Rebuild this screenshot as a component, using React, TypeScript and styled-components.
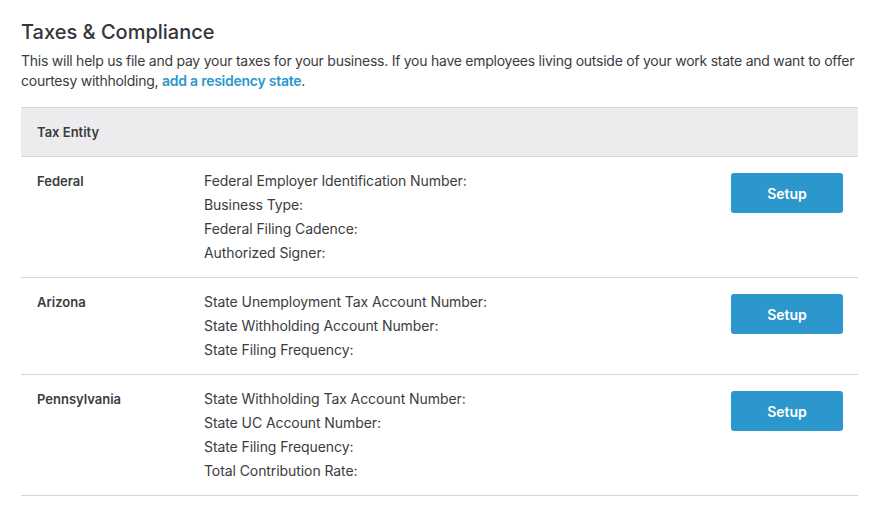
import styled, { createGlobalStyle } from 'styled-components'

const GlobalStyle = createGlobalStyle`
  body {
    margin: 0;
    background: #fff;
    font-family: Inter, "Liberation Sans", sans-serif;
    color: #3a3c40;
  }
`

const Page = styled.div`
  padding: 19px 30px 0 21px;
`

const Title = styled.h1`
  margin: 0;
  font-size: 20px;
  line-height: 26px;
  font-weight: 500;
  color: #33363b;
`

const Intro = styled.p`
  margin: 6px 0 16px;
  font-size: 14px;
  line-height: 20px;
  letter-spacing: -0.25px;
`

const Link = styled.a`
  color: #2b97cc;
  font-weight: 600;
  text-decoration: none;
`

const Table = styled.div`
  border-top: 1px solid #d6d6d9;
`

const Head = styled.div`
  background: #ececee;
  height: 48px;
  display: flex;
  align-items: center;
  padding-left: 16px;
  font-size: 13px;
  font-weight: 600;
  border-bottom: 1px solid #d6d6d9;
`

const Row = styled.div`
  display: grid;
  grid-template-columns: 167px 1fr 112px;
  align-items: start;
  padding: 12px 15px 12px 16px;
  border-bottom: 1px solid #d6d6d9;
`

const Entity = styled.div`
  font-size: 13px;
  font-weight: 600;
  line-height: 24px;
`

const Fields = styled.ul`
  list-style: none;
  margin: 0;
  padding: 0;
  font-size: 14px;
  line-height: 24px;
  letter-spacing: -0.08px;
`

const Button = styled.button`
  margin-top: 4px;
  width: 112px;
  height: 40px;
  border: none;
  border-radius: 3px;
  background: #2b97cc;
  color: #fff;
  font-family: inherit;
  font-size: 14px;
  font-weight: 600;
`

const entities = [
  {
    name: 'Federal',
    fields: [
      'Federal Employer Identification Number:',
      'Business Type:',
      'Federal Filing Cadence:',
      'Authorized Signer:',
    ],
  },
  {
    name: 'Arizona',
    fields: [
      'State Unemployment Tax Account Number:',
      'State Withholding Account Number:',
      'State Filing Frequency:',
    ],
  },
  {
    name: 'Pennsylvania',
    fields: [
      'State Withholding Tax Account Number:',
      'State UC Account Number:',
      'State Filing Frequency:',
      'Total Contribution Rate:',
    ],
  },
]

export default function App() {
  return (
    <Page>
      <GlobalStyle />
      <Title>Taxes &amp; Compliance</Title>
      <Intro>
        This will help us file and pay your taxes for your business. If you have employees
        living outside of your work state and want to offer courtesy withholding,{' '}
        <Link href="#">add a residency state</Link>.
      </Intro>
      <Table>
        <Head>Tax Entity</Head>
        {entities.map((e) => (
          <Row key={e.name}>
            <Entity>{e.name}</Entity>
            <Fields>
              {e.fields.map((f) => (
                <li key={f}>{f}</li>
              ))}
            </Fields>
            <Button>Setup</Button>
          </Row>
        ))}
      </Table>
    </Page>
  )
}
